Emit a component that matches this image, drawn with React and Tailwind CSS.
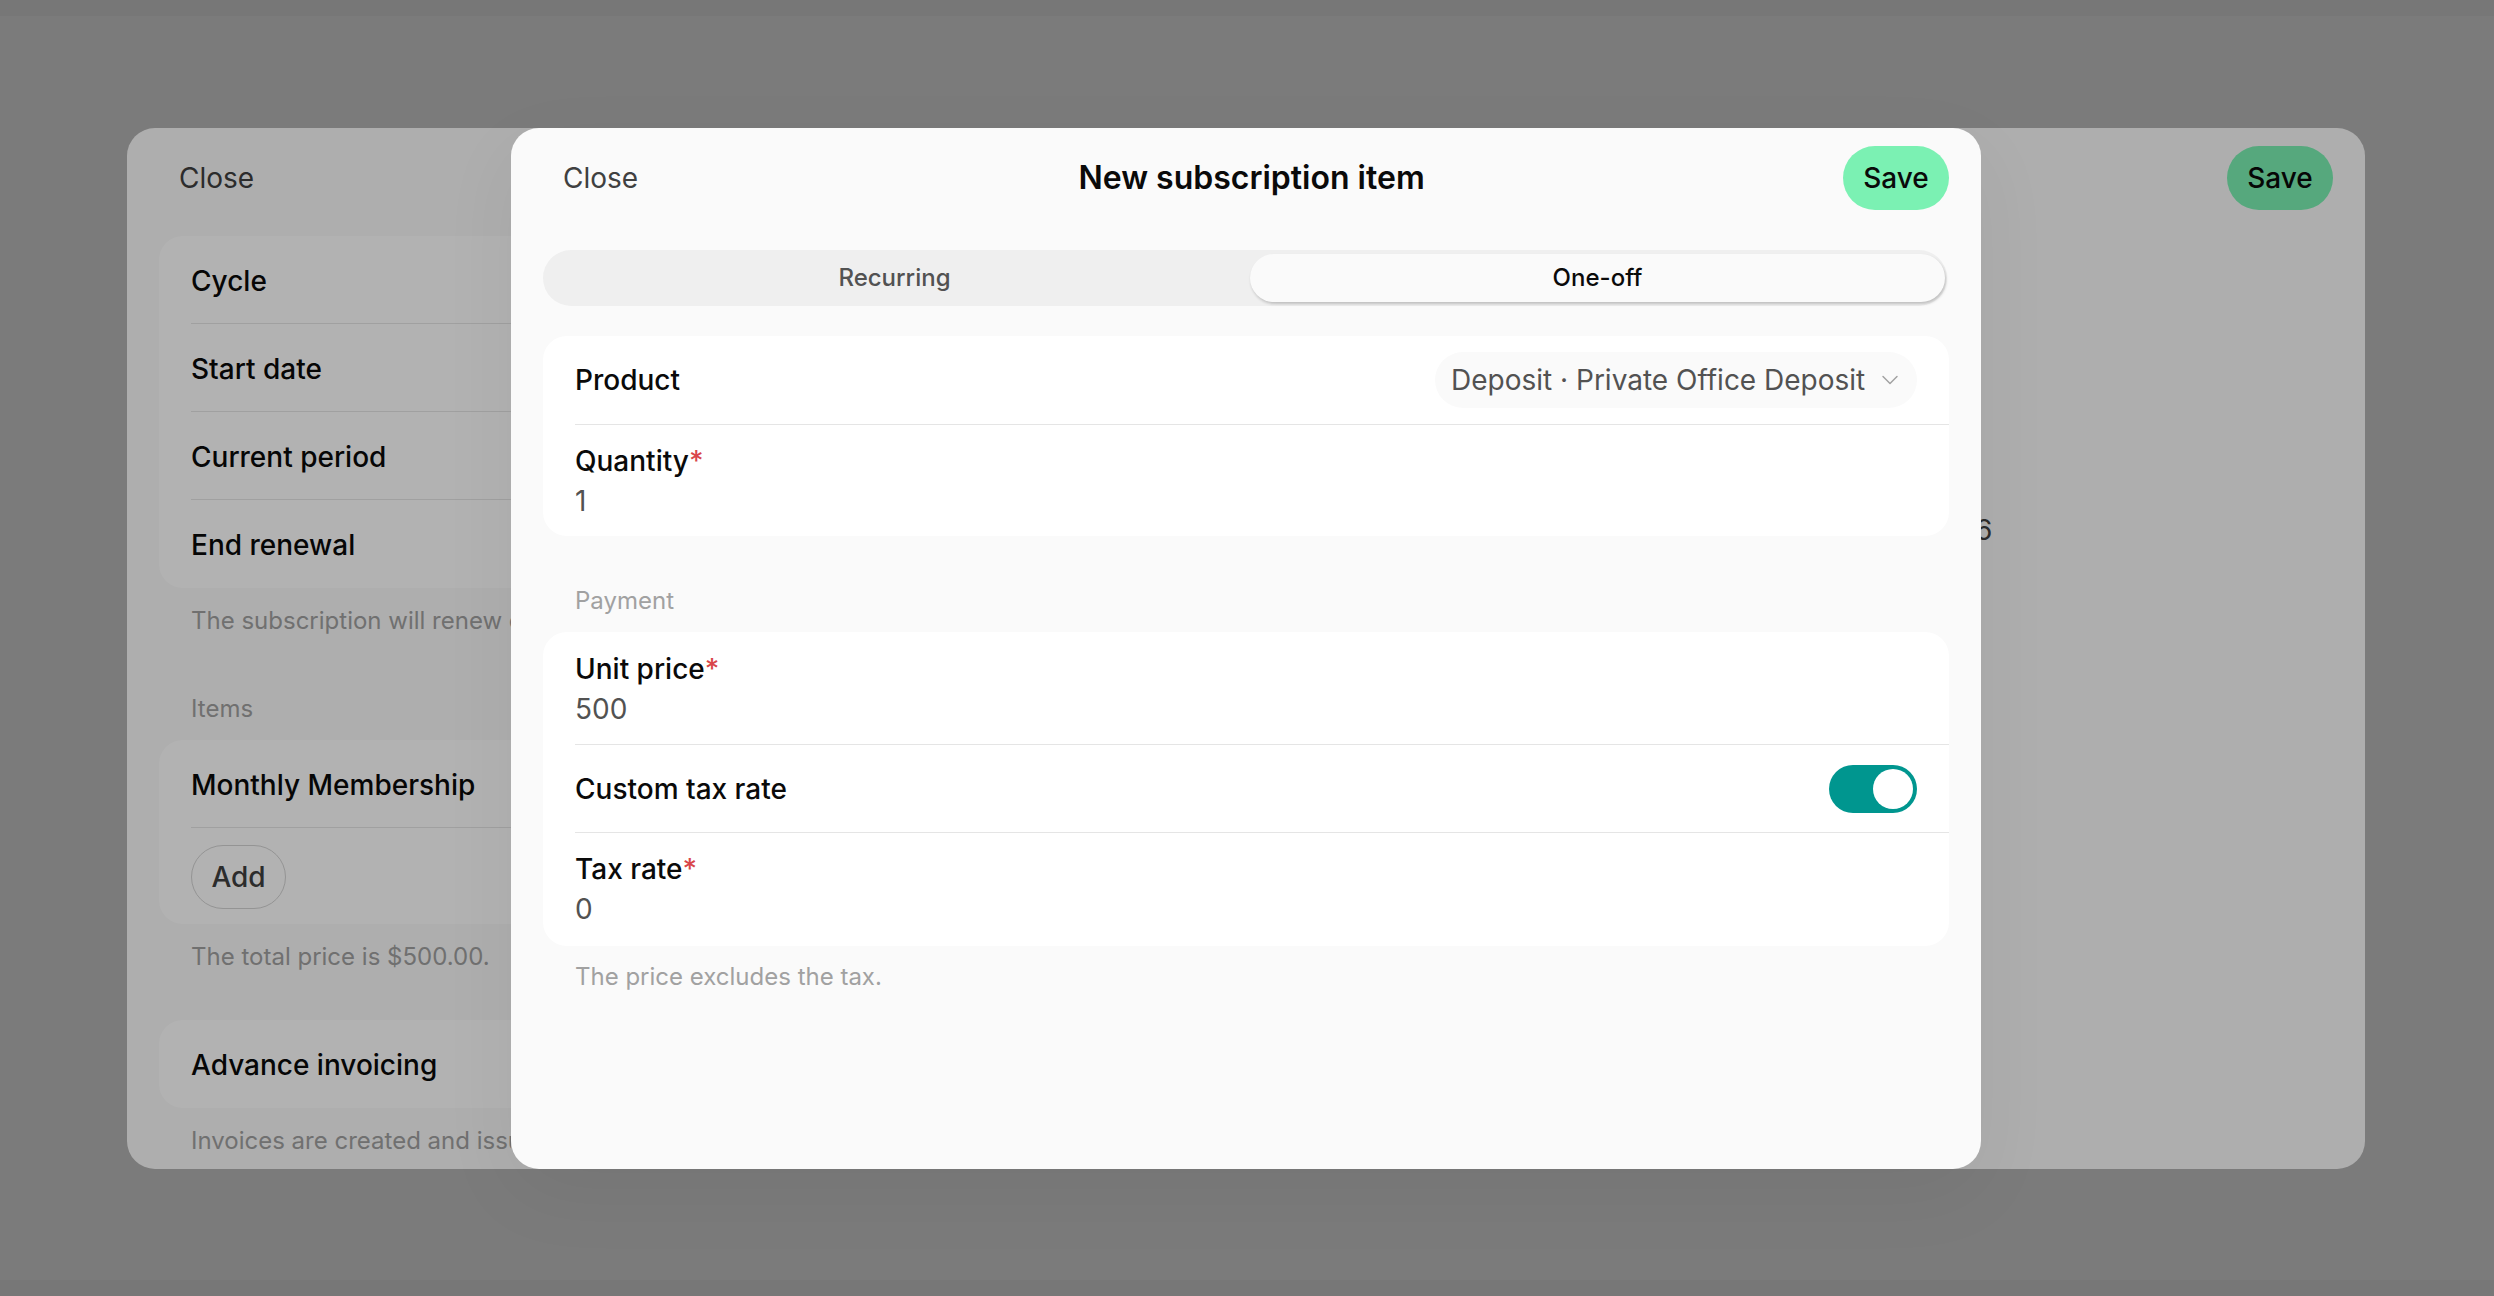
import { ChevronDown } from "lucide-react";

const labelCls = "text-[28px] leading-[40px] font-medium text-[#0a0a0a]";
const noteCls = "text-[24px] leading-[32px] text-[#a1a1a1] whitespace-nowrap";

function Req({ children }) {
  return (
    <div className={labelCls}>
      {children}
      <span className="text-[#d9464a]">*</span>
    </div>
  );
}

function BackRow({ children, last }) {
  return (
    <div className={`h-[88px] pt-[2px] flex items-center ml-[32px] ${last ? "" : "border-b border-[#e5e5e5]"}`}>
      <span className={labelCls + " whitespace-nowrap"}>{children}</span>
    </div>
  );
}

function Header({ title }) {
  return (
    <div className="h-[100px] flex items-center justify-between pl-[52px] pr-[32px] shrink-0">
      <span className="text-[28px] leading-[40px] text-[#404040]">Close</span>
      {title && <span className="text-[32px] leading-[44px] font-semibold text-[#0a0a0a] ml-[22px]">{title}</span>}
      <button className="w-[106px] h-[64px] rounded-full bg-[#7bf1b3] text-[28px] font-medium text-[#0a0a0a]">Save</button>
    </div>
  );
}

function BackDialog() {
  return (
    <div className="w-[2238px] h-[1041px] rounded-[28px] bg-[#fafafa] overflow-hidden flex flex-col">
      <Header />
      <div className="flex flex-1">
        <div className="w-[1400px] pl-[32px] pt-[8px]">
          <div className="bg-white rounded-[24px]">
            <BackRow>Cycle</BackRow>
            <BackRow>Start date</BackRow>
            <BackRow>Current period</BackRow>
            <BackRow last>End renewal</BackRow>
          </div>
          {/* long notes stop at the front dialog's edge */}
          <p className={noteCls + " w-[320px] overflow-hidden ml-[32px] mt-[17px]"}>The subscription will renew on the next period</p>
          <p className={noteCls + " ml-[32px] mt-[56px]"}>Items</p>
          <div className="bg-white rounded-[24px] mt-[15px] h-[184px]">
            <BackRow>Monthly Membership</BackRow>
            <div className="ml-[32px] mt-[17px] w-[95px] h-[64px] rounded-full border border-[#d4d4d4] flex items-center justify-center text-[28px] font-medium text-[#404040]">Add</div>
          </div>
          <p className={noteCls + " ml-[32px] mt-[17px]"}>The total price is $500.00.</p>
          <div className="bg-white rounded-[24px] mt-[47px] h-[88px] pl-[32px] pt-[2px] flex items-center">
            <span className={labelCls}>Advance invoicing</span>
          </div>
          <p className={noteCls + " w-[320px] overflow-hidden ml-[32px] mt-[17px]"}>Invoices are created and issued in advance</p>
        </div>
        <div className="pt-[282px] pl-[448px]">
          <span className="text-[28px] leading-[40px] text-[#404040]">6</span>
        </div>
      </div>
    </div>
  );
}

function Toggle() {
  return (
    <div className="w-[88px] h-[48px] rounded-full bg-[#00968f] p-[4px] flex justify-end">
      <div className="w-[40px] h-[40px] rounded-full bg-white" />
    </div>
  );
}

function FrontDialog() {
  return (
    <div className="w-[1470px] h-[1041px] rounded-[28px] bg-[#fafafa] flex flex-col shadow-[0_24px_80px_rgba(0,20,20,0.05)]">
      <Header title="New subscription item" />
      <div className="mx-[32px] w-[1406px]">
        <div className="mt-[22px] h-[56px] w-[1404px] rounded-full bg-[#efefef] flex items-center pr-[2px] text-[24px]">
          <div className="flex-1 text-center text-[#525252] font-medium pr-[4px]">Recurring</div>
          <div className="w-[695px] h-[48px] rounded-full bg-[#fafafa] shadow-[1px_2px_3px_rgba(0,0,0,0.2)] flex items-center justify-center font-medium text-[#0a0a0a]">One-off</div>
        </div>
        <div className="mt-[30px] bg-white rounded-[24px] h-[200px]">
          <div className="h-[89px] ml-[32px] pr-[32px] border-b border-[#e5e5e5] flex items-center justify-between">
            <span className={labelCls}>Product</span>
            <div className="h-[56px] w-[482px] rounded-full bg-[#fafafa] pl-[16px] flex items-center text-[28px] text-[#525252] whitespace-nowrap">
              Deposit · Private Office Deposit
              <ChevronDown size={28} strokeWidth={1.25} className="ml-[11px] text-[#a1a1a1]" />
            </div>
          </div>
          <div className="ml-[32px] pt-[16px]">
            <Req>Quantity</Req>
            <div className="text-[28px] leading-[40px] text-[#525252]">1</div>
          </div>
        </div>
        <p className={noteCls + " ml-[32px] mt-[49px]"}>Payment</p>
        <div className="mt-[15px] bg-white rounded-[24px] h-[314px]">
          <div className="h-[113px] ml-[32px] pt-[17px] border-b border-[#e5e5e5]">
            <Req>Unit price</Req>
            <div className="text-[28px] leading-[40px] text-[#525252]">500</div>
          </div>
          <div className="h-[88px] ml-[32px] pr-[32px] border-b border-[#e5e5e5] flex items-center justify-between">
            <span className={labelCls}>Custom tax rate</span>
            <Toggle />
          </div>
          <div className="ml-[32px] pt-[16px]">
            <Req>Tax rate</Req>
            <div className="text-[28px] leading-[40px] text-[#525252]">0</div>
          </div>
        </div>
        <p className={noteCls + " ml-[32px] mt-[15px]"}>The price excludes the tax.</p>
      </div>
    </div>
  );
}

export default function App() {
  return (
    <div className="relative h-[1296px] overflow-hidden bg-[#b0b0b0] pt-[128px] pl-[127px] font-['Inter',sans-serif]">
      <BackDialog />
      <div className="absolute inset-0 bg-black/30 pt-[128px] pl-[511px]">
        <div className="absolute top-0 left-0 right-0 h-[16px] bg-black/[0.03]" />
        <div className="absolute bottom-0 left-0 right-0 h-[16px] bg-black/[0.03]" />
        <FrontDialog />
      </div>
    </div>
  );
}
